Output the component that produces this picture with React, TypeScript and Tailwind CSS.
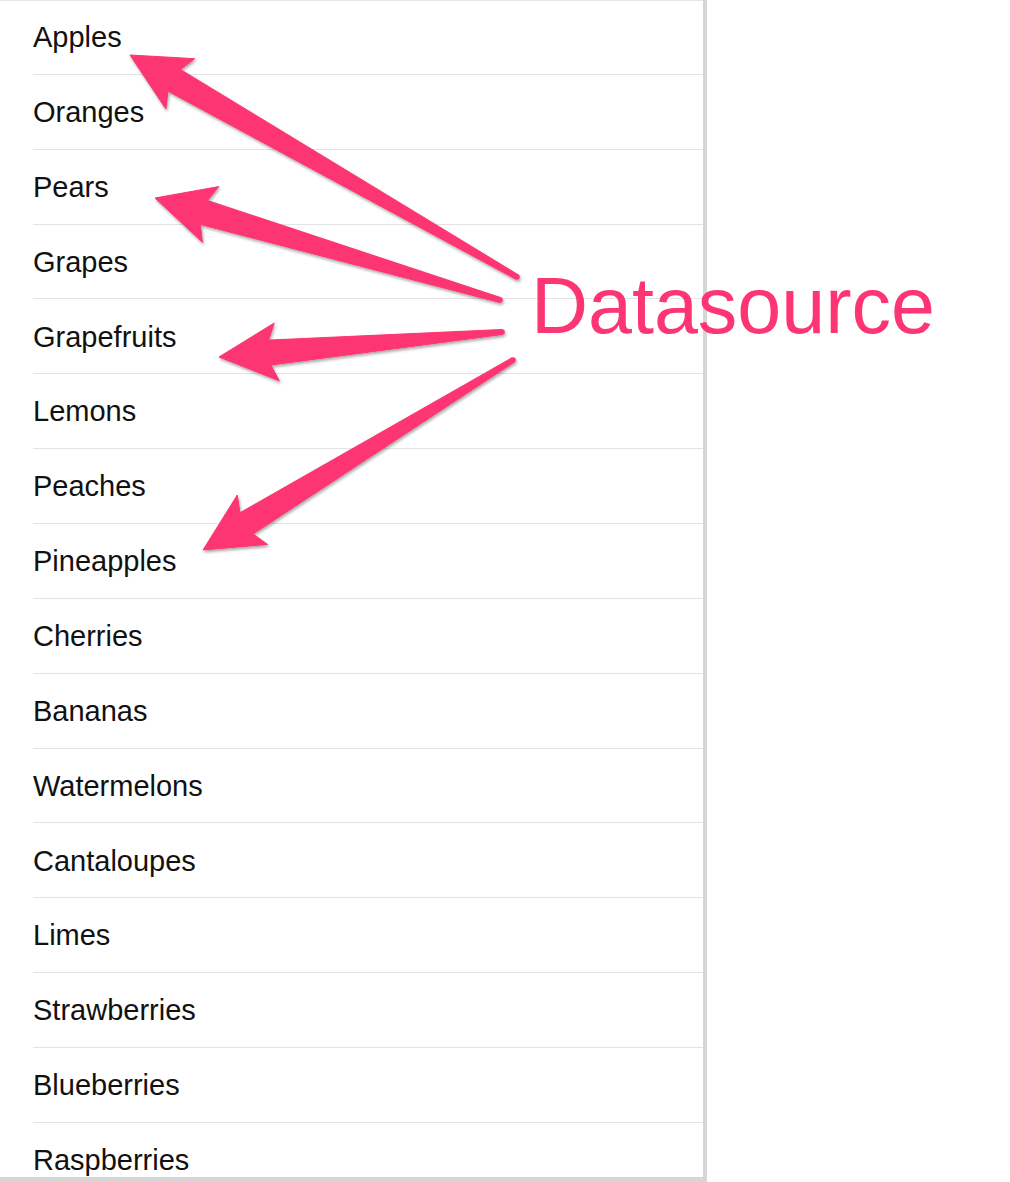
import React from "react";

const fruits = [
  "Apples",
  "Oranges",
  "Pears",
  "Grapes",
  "Grapefruits",
  "Lemons",
  "Peaches",
  "Pineapples",
  "Cherries",
  "Bananas",
  "Watermelons",
  "Cantaloupes",
  "Limes",
  "Strawberries",
  "Blueberries",
  "Raspberries",
];

type P = [number, number];

function arrowPoints(tip: P, tail: P): string {
  const dx = tail[0] - tip[0];
  const dy = tail[1] - tip[1];
  const len = Math.hypot(dx, dy);
  const u: P = [dx / len, dy / len];
  const n: P = [-u[1], u[0]];
  const at = (along: number, perp: number, base: P = tip): P => [
    base[0] + u[0] * along + n[0] * perp,
    base[1] + u[1] * along + n[1] * perp,
  ];
  const pts: P[] = [
    tip,
    at(58, -29),
    at(51, -12.5),
    at(0, -2.5, tail),
    at(0, 2.5, tail),
    at(51, 12.5),
    at(58, 29),
  ];
  return pts.map((p) => `${p[0].toFixed(1)},${p[1].toFixed(1)}`).join(" ");
}

const arrows: { tip: P; tail: P }[] = [
  { tip: [130, 55], tail: [517, 277] },
  { tip: [155, 198], tail: [500, 300] },
  { tip: [219, 357], tail: [502, 332] },
  { tip: [203, 550], tail: [513, 360] },
];

export default function App() {
  return (
    <div
      className="relative w-[1010px] h-[1182px] overflow-hidden bg-white"
      style={{ fontFamily: '"Liberation Sans", Arial, Helvetica, sans-serif' }}
    >
      <div className="w-[707px] h-[1182px] border-r-4 border-b-[5px] border-[#d6d6d6] bg-white overflow-hidden shadow-[inset_0_1px_0_#e6e6e6]">
        {fruits.map((f) => (
          <div
            key={f}
            className="ml-[33px] h-[74.86px] pt-[2px] flex items-center border-b border-[#e3e3e3] text-[29px] text-[#111111]"
          >
            {f}
          </div>
        ))}
      </div>

      <svg
        className="absolute left-0 top-0 pointer-events-none"
        width={1010}
        height={1182}
        viewBox="0 0 1010 1182"
      >
        <defs>
          <filter id="sh" x="-20%" y="-20%" width="140%" height="140%">
            <feDropShadow dx="1" dy="2" stdDeviation="1.6" floodColor="#000" floodOpacity="0.35" />
          </filter>
        </defs>
        {arrows.map((a, i) => (
          <g key={i} filter="url(#sh)">
            <polygon
              points={arrowPoints(a.tip, a.tail)}
              fill="#fd3572"
              stroke="#fd3572"
              strokeWidth={1}
              strokeLinejoin="round"
            />
            <circle cx={a.tail[0]} cy={a.tail[1]} r={2.8} fill="#fd3572" />
          </g>
        ))}
      </svg>

      <div className="absolute left-[531px] top-[266px] text-[79px] leading-none text-[#fd3572] whitespace-nowrap">
        Datasource
      </div>
    </div>
  );
}
